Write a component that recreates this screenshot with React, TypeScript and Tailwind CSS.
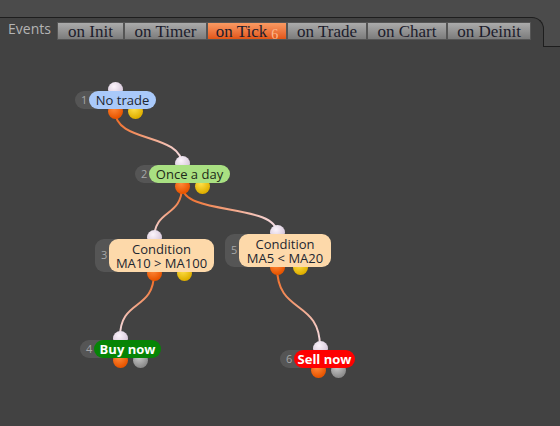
import React from "react";

type Out = { x: number; y: number; color: "orange" | "yellow" | "gray" };

interface NodeProps {
  num: number;
  x: number; // left of number pill
  y: number; // top of pill
  w: number; // label width
  h: number;
  lines: string[];
  labelClass: string;
  inX: number;
  outs: Out[];
}

const circleClass: Record<string, string> = {
  orange: "bg-[radial-gradient(circle_at_40%_30%,#ff8a3a,#e85500_70%)]",
  yellow: "bg-[radial-gradient(circle_at_40%_30%,#ffe04a,#e0b000_70%)]",
  gray: "bg-[radial-gradient(circle_at_40%_30%,#c8c8c8,#8c8c8c_70%)]",
};

function Dot({ cx, cy, className }: { cx: number; cy: number; className: string }) {
  return (
    <div
      className={`absolute h-[15px] w-[15px] rounded-full ${className}`}
      style={{ left: cx - 7.5, top: cy - 7.5 }}
    />
  );
}

function FlowNode({ num, x, y, w, h, lines, labelClass, inX, outs }: NodeProps) {
  return (
    <>
      <Dot cx={inX} cy={y - 2} className="bg-[radial-gradient(circle_at_40%_30%,#fbf4fb,#d4c4d8_75%)]" />
      {outs.map((o, i) => (
        <Dot key={i} cx={o.x} cy={o.y} className={circleClass[o.color]} />
      ))}
      <div
        className="absolute flex items-center rounded-[9px] bg-[#555555] pl-[6px] text-[11px] text-[#a8a8a8]"
        style={{ left: x, top: y, height: h, width: 34 }}
      >
        {num}
      </div>
      <div
        className={`absolute flex flex-col items-center justify-center rounded-[9px] leading-[14px] ${labelClass}`}
        style={{ left: x + 14, top: y, width: w, height: h }}
      >
        {lines.map((l) => (
          <span key={l}>{l}</span>
        ))}
      </div>
    </>
  );
}

const wires: [number, number, number, number][] = [
  [115, 111, 182, 165],
  [182, 186, 154, 240],
  [182, 186, 277, 233],
  [154, 273, 120, 337],
  [277, 267, 320, 347],
];

const tabs = [
  { label: "on Init", w: 67 },
  { label: "on Timer", w: 83 },
  { label: "on Tick", w: 80, active: true },
  { label: "on Trade", w: 80 },
  { label: "on Chart", w: 80 },
  { label: "on Deinit", w: 84 },
];

export default function App() {
  return (
    <div className="relative flex h-[426px] w-[560px] flex-col overflow-hidden bg-[#424242] font-['Open_Sans',sans-serif]">
      {/* header */}
      <div className="flex h-[47px]">
        <div className="flex flex-1 flex-col bg-[#4b4b4b]">
          <div className="h-[17px]" />
          <div className="flex flex-1 items-start rounded-tr-[12px] border-t border-r border-[#1e1e1e] bg-[#424242] pt-[4px]">
            <span className="w-[57px] pl-[8px] text-[14px] leading-[13px] text-[#b4b4b4]">Events</span>
            <div className="flex">
              {tabs.map((t) => (
                <div
                  key={t.label}
                  className={`flex h-[18px] items-center justify-center border border-[#555] pt-[1px] font-['Liberation_Serif',serif] text-[17px] leading-none text-[#1c1c2c] ${
                    t.active
                      ? "bg-gradient-to-b from-[#f99a62] to-[#e25514]"
                      : "bg-gradient-to-b from-[#ababab] to-[#7c7c7c]"
                  }`}
                  style={{ width: t.w }}
                >
                  {t.label}
                  {t.active && <span className="ml-[4px] mt-[6px] text-[14px] text-[#fbb98e]">6</span>}
                </div>
              ))}
            </div>
          </div>
        </div>
        <div className="w-[16px] border-b border-[#1e1e1e] bg-[#4b4b4b]" />
      </div>

      {/* canvas */}
      <svg className="absolute inset-0" width={560} height={426}>
        <defs>
          {wires.map(([x1, y1, x2, y2], i) => (
            <linearGradient key={i} id={`w${i}`} gradientUnits="userSpaceOnUse" x1={x1} y1={y1} x2={x2} y2={y2}>
              <stop offset="0" stopColor="#f06418" />
              <stop offset="1" stopColor="#f6e2ec" />
            </linearGradient>
          ))}
        </defs>
        {wires.map(([x1, y1, x2, y2], i) => {
          const d = Math.max(30, (y2 - y1) * 0.6);
          return (
            <path
              key={i}
              d={`M${x1} ${y1} C${x1} ${y1 + d} ${x2} ${y2 - d} ${x2} ${y2}`}
              fill="none"
              stroke={`url(#w${i})`}
              strokeWidth={2}
            />
          );
        })}
      </svg>

      <FlowNode
        num={1}
        x={75}
        y={91}
        w={67}
        h={18}
        lines={["No trade"]}
        labelClass="bg-[#a9c9fa] text-[13px] text-[#1e2630]"
        inX={115}
        outs={[
          { x: 115, y: 111, color: "orange" },
          { x: 135, y: 111, color: "yellow" },
        ]}
      />
      <FlowNode
        num={2}
        x={135}
        y={165}
        w={81}
        h={18}
        lines={["Once a day"]}
        labelClass="bg-[#a9e082] text-[13px] text-[#1e2a18]"
        inX={182}
        outs={[
          { x: 182, y: 186, color: "orange" },
          { x: 202, y: 186, color: "yellow" },
        ]}
      />
      <FlowNode
        num={3}
        x={95}
        y={239}
        w={105}
        h={33}
        lines={["Condition", "MA10 > MA100"]}
        labelClass="bg-[#fdd9aa] text-[13px] text-[#1e2630]"
        inX={154}
        outs={[
          { x: 154, y: 273, color: "orange" },
          { x: 184, y: 273, color: "yellow" },
        ]}
      />
      <FlowNode
        num={5}
        x={225}
        y={234}
        w={92}
        h={33}
        lines={["Condition", "MA5 < MA20"]}
        labelClass="bg-[#fdd9aa] text-[13px] text-[#1e2630]"
        inX={277}
        outs={[
          { x: 277, y: 267, color: "orange" },
          { x: 300, y: 267, color: "yellow" },
        ]}
      />
      <FlowNode
        num={4}
        x={80}
        y={340}
        w={67}
        h={18}
        lines={["Buy now"]}
        labelClass="bg-[#068406] text-[13px] font-bold text-white"
        inX={120}
        outs={[
          { x: 120, y: 360, color: "orange" },
          { x: 140, y: 360, color: "gray" },
        ]}
      />
      <FlowNode
        num={6}
        x={280}
        y={350}
        w={61}
        h={18}
        lines={["Sell now"]}
        labelClass="bg-[#fe0000] text-[13px] font-bold text-white"
        inX={320}
        outs={[
          { x: 318, y: 370, color: "orange" },
          { x: 338, y: 370, color: "gray" },
        ]}
      />
    </div>
  );
}
